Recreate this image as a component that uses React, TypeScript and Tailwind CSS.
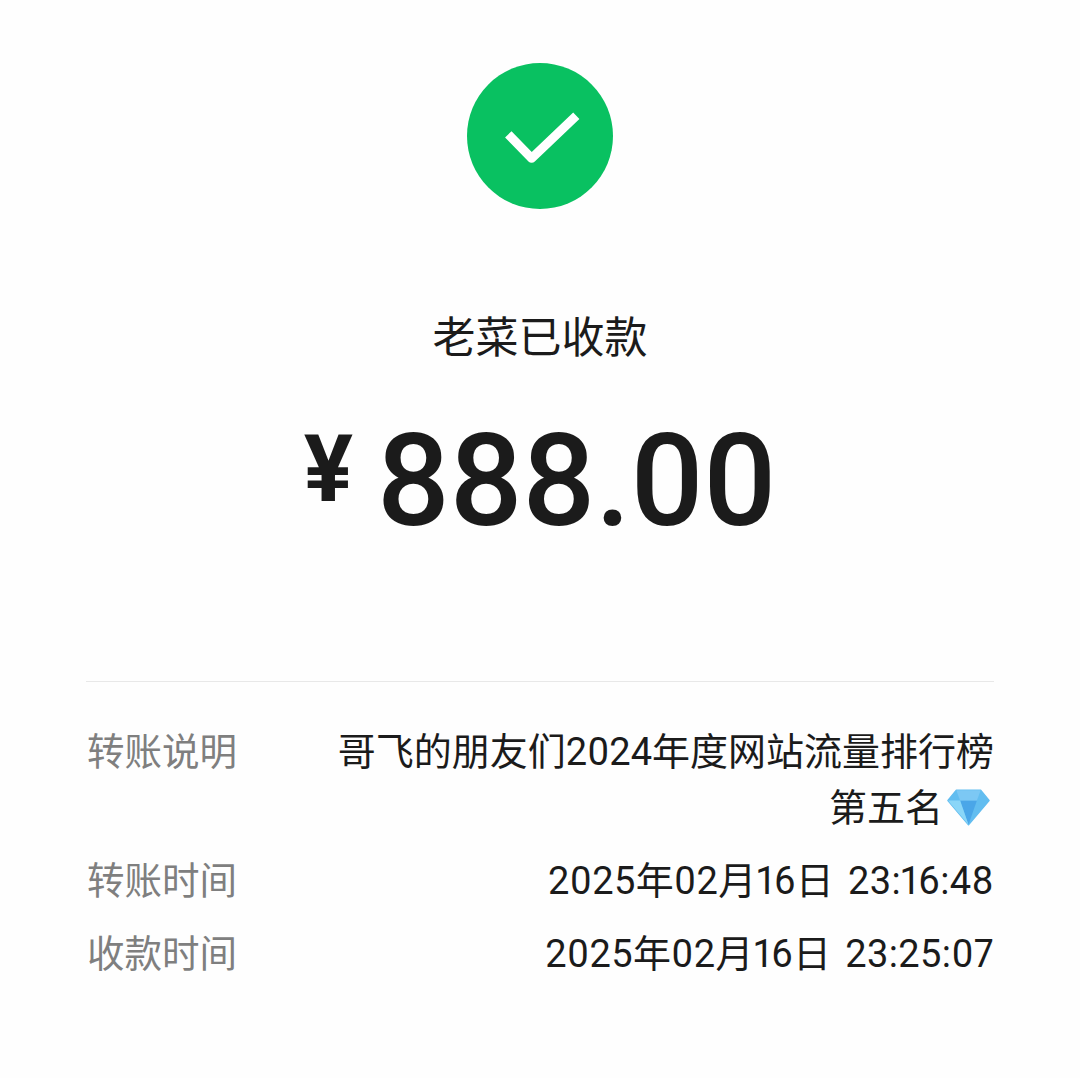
const cjk = "font-['Roboto','Noto_Sans_CJK_SC',sans-serif]";

function Row({ label, dense, children }: { label: string; dense?: boolean; children: React.ReactNode }) {
  return (
    <div className="flex justify-between">
      <div className="w-[200px] shrink-0 pl-[1px] text-[37.5px] text-[#7f7f7f]">{label}</div>
      <div className={`text-right text-[#1b1b1b] proportional-nums [word-spacing:4px] ${dense ? 'tracking-[0.4px]' : ''}`}>{children}</div>
    </div>
  );
}

function Gem() {
  return (
    <svg width="43" height="38" viewBox="0 0 46 40" className="inline-block align-[-5px] ml-[4px] mr-[4px]">
      <polygon points="10,2 36,2 45,13 23,39 1,13" fill="#62bdf0" stroke="#62bdf0" strokeWidth="1.5" strokeLinejoin="round" />
      <polygon points="14,13 32,13 23,39" fill="#4aa6e8" />
      <polygon points="10,2 36,2 32,13 14,13" fill="#7cc8f4" />
      <polygon points="1,13 14,13 23,39" fill="#8ad6f8" />
    </svg>
  );
}

export default function App() {
  return (
    <div className={`w-[1080px] h-[1078px] bg-[#fefefe] flex flex-col items-center pt-[63px] ${cjk}`}>
      <div className="w-[146px] h-[146px] rounded-full bg-[#09c161] flex items-center justify-center">
        <svg width="80" height="60" viewBox="0 0 80 60" fill="none">
          <path d="M8.3 28.3 L31.7 52.3 L76.3 9.7" stroke="#ffffff" strokeWidth="9" strokeLinejoin="round" />
        </svg>
      </div>
      <div className="mt-[101px] text-[43px] leading-[56px] text-[#1b1b1b]">老菜已收款</div>
      <div className="mt-[45px] flex items-start text-[#1b1b1b] font-medium">
        <span className="mt-[7px] mr-[24px] text-[92px] leading-[104px] font-bold">¥</span>
        <span className="text-[128px] leading-[140px]">888.00</span>
      </div>
      <div className="mt-[130px] w-[908px] border-t border-[#e8e8e8] pt-[42px] flex flex-col gap-[17px] text-[38px] leading-[56px]">
        <Row label="转账说明">
          哥飞的朋友们2024年度网站流量排行榜
          <br />
          第五名<Gem />
        </Row>
        <Row label="转账时间" dense>2025年02月16日 23:16:48</Row>
        <Row label="收款时间" dense>2025年02月16日 23:25:07</Row>
      </div>
    </div>
  );
}
